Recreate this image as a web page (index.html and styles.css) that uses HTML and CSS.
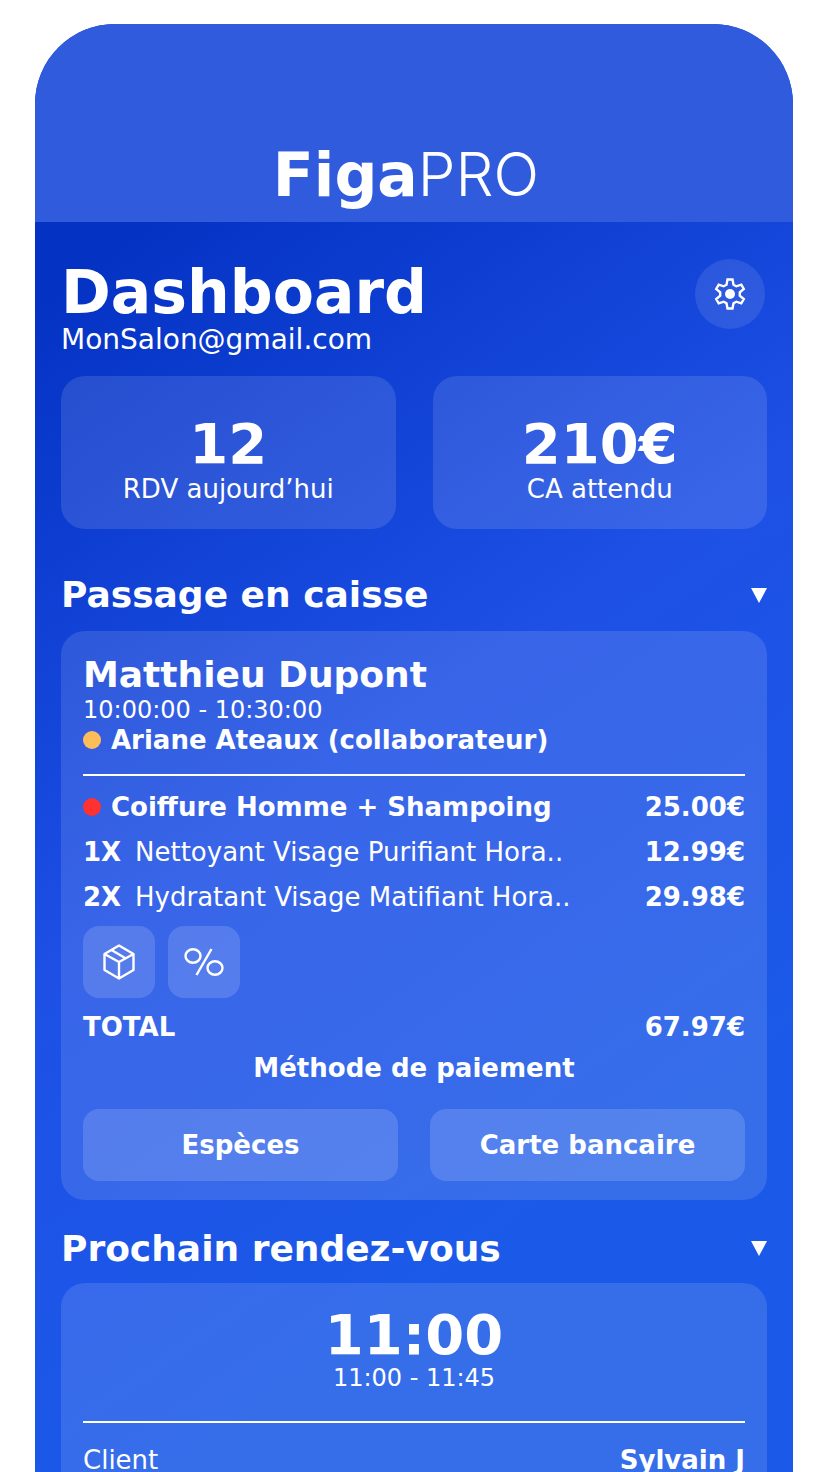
FILE: index.html
```html
<!DOCTYPE html>
<html lang="fr">
<head>
    <meta charset="UTF-8">
    <meta name="viewport" content="width=device-width, initial-scale=1.0">
    <title>FigaPRO</title>
    <link rel="stylesheet" href="styles.css">
</head>
<body>
    <div class="app">
        <header class="app-header">
            <div class="logo"><strong>Figa</strong><span class="pro">PRO</span></div>
        </header>

        <main class="content">
            <div class="page-title">
                <div>
                    <h1>Dashboard</h1>
                    <p class="email">MonSalon@gmail.com</p>
                </div>
                <button class="settings" type="button" aria-label="Paramètres">
                    <svg viewBox="-18 -18 36 36" width="36" height="36" fill="none" stroke="#fff" stroke-width="2.4">
                        <path d="M-3.5-9.3L-2.5-14.5H2.5L3.5-9.3 6.3-7.7 11.3-9.4 13.8-5.1 9.8-1.6V1.6L13.8 5.1 11.3 9.4 6.3 7.7 3.5 9.3 2.5 14.5H-2.5L-3.5 9.3-6.3 7.7-11.3 9.4-13.8 5.1-9.8 1.6V-1.6L-13.8-5.1-11.3-9.4-6.3-7.7z"/>
                        <circle r="5" fill="#fff" stroke="none"/>
                    </svg>
                </button>
            </div>

            <!-- Chiffres du jour -->
            <div class="stats">
                <div class="stat">
                    <strong>12</strong>
                    <span>RDV aujourd’hui</span>
                </div>
                <div class="stat">
                    <strong>210€</strong>
                    <span>CA attendu</span>
                </div>
            </div>

            <!-- Passage en caisse -->
            <details class="section" open>
                <summary>
                    <h2>Passage en caisse</h2>
                    <svg class="arrow" viewBox="0 0 16 15" width="16" height="15"><path d="M0 0h16L8 15z" fill="#fff"/></svg>
                </summary>
                <div class="card">
                    <h3>Matthieu Dupont</h3>
                    <p class="hours">10:00:00 - 10:30:00</p>
                    <p class="staff"><span class="dot orange"></span>Ariane Ateaux (collaborateur)</p>
                    <hr>
                    <ul class="lines">
                        <li><span class="dot red"></span><b class="name">Coiffure Homme + Shampoing</b><b>25.00€</b></li>
                        <li><b class="qty">1X</b><span class="name">Nettoyant Visage Purifiant Hora..</span><b>12.99€</b></li>
                        <li><b class="qty">2X</b><span class="name">Hydratant Visage Matifiant Hora..</span><b>29.98€</b></li>
                    </ul>
                    <div class="tools">
                        <button type="button" aria-label="Ajouter un produit">
                            <svg viewBox="0 0 34 36" width="34" height="36" fill="none" stroke="#fff" stroke-width="2.4" stroke-linejoin="round">
                                <path d="M17 1.5l14.500 8.500v16L17 34.500 2.500 26V10zM2.500 10L17 18l14.500-8M17 18v16.500M23.500 14.200L9.500 6"/>
                            </svg>
                        </button>
                        <button type="button" aria-label="Remise">
                            <svg viewBox="0 0 40 28" width="40" height="28" fill="none" stroke="#fff" stroke-width="2.4">
                                <ellipse cx="9" cy="8" rx="7.5" ry="6.7"/>
                                <ellipse cx="31" cy="20" rx="7.5" ry="6.7"/>
                                <path d="M27.5 1L12.5 27"/>
                            </svg>
                        </button>
                    </div>
                    <div class="total"><b>TOTAL</b><b>67.97€</b></div>
                    <h4>Méthode de paiement</h4>
                    <div class="payments">
                        <button type="button">Espèces</button>
                        <button type="button">Carte bancaire</button>
                    </div>
                </div>
            </details>

            <!-- Prochain rendez-vous -->
            <details class="section" open>
                <summary>
                    <h2>Prochain rendez-vous</h2>
                    <svg class="arrow" viewBox="0 0 16 15" width="16" height="15"><path d="M0 0h16L8 15z" fill="#fff"/></svg>
                </summary>
                <div class="card next">
                    <div class="time">11:00</div>
                    <p class="slot">11:00 - 11:45</p>
                    <hr>
                    <div class="client"><span>Client</span><b>Sylvain J</b></div>
                </div>
            </details>
        </main>
    </div>
</body>
</html>
```
FILE: styles.css
```css
* {
    box-sizing: border-box;
}

body {
    background-color: #fff;
    color: #fff;
    font-family: "DejaVu Sans", Verdana, sans-serif;
    font-size: 26px;
    line-height: 30px;
    margin: 0;
    height: 100vh;
    overflow: hidden;
}

h1, h2, h3, h4, p, ul {
    margin: 0;
    padding: 0;
}

b, strong {
    font-weight: bold;
}

button {
    border: none;
    color: #fff;
    font: inherit;
    font-weight: bold;
    padding: 0;
    cursor: pointer;
}

.app {
    margin: 24px 35px 0;
    min-height: 100vh;
    border-radius: 80px 80px 0 0;
    overflow: hidden;
    background: linear-gradient(145deg, #0433c4 14%, #1e50e6 48%, #1b5ae8 78%, #1b5ae8);
}

.app-header {
    height: 198px;
    padding-bottom: 12px;
    display: flex;
    align-items: flex-end;
    justify-content: center;
    background-color: #2f5bdc;
}

.logo {
    font-size: 60px;
    line-height: 70px;
    padding-right: 16px;
}

.pro {
    font-family: Inter, sans-serif;
    font-weight: 300;
}

.content {
    padding: 37px 26px 0;
}

.page-title {
    display: flex;
    justify-content: space-between;
    align-items: flex-start;
}

h1 {
    font-size: 60px;
    line-height: 66px;
}

.email {
    font-size: 28px;
}

.settings {
    width: 70px;
    height: 70px;
    margin-right: 2px;
    border-radius: 50%;
    display: flex;
    align-items: center;
    justify-content: center;
    background-color: rgba(255, 255, 255, 0.1);
}

.stats {
    display: grid;
    grid-template-columns: 1fr 1fr;
    gap: 37px;
    margin-top: 21px;
}

.stat {
    height: 153px;
    padding-top: 38px;
    border-radius: 24px;
    display: flex;
    flex-direction: column;
    align-items: center;
    background-color: rgba(255, 255, 255, 0.12);
}

.stat strong {
    font-size: 56px;
    line-height: 60px;
}

.section summary {
    height: 102px;
    padding-top: 30px;
    display: flex;
    align-items: center;
    justify-content: space-between;
    list-style: none;
    cursor: pointer;
}

.section + .section summary {
    height: 83px;
    padding-top: 14px;
}

h2, h3 {
    font-size: 36px;
    line-height: 40px;
}

.card {
    padding: 24px 22px 19px;
    border-radius: 24px;
    background-color: rgba(255, 255, 255, 0.12);
}

.hours, .slot {
    font-size: 24px;
}

.staff {
    display: flex;
    align-items: center;
    font-weight: bold;
}

.dot {
    width: 18px;
    height: 18px;
    margin-right: 10px;
    border-radius: 50%;
}

.orange {
    background-color: #ffbd59;
}

.red {
    background-color: #ff3131;
}

hr {
    height: 2px;
    margin: 19px 0 8px;
    border: none;
    background-color: #fff;
}

.lines {
    list-style: none;
}

.lines li {
    display: flex;
    align-items: center;
    height: 45px;
}

.name {
    flex: 1;
    white-space: nowrap;
}

.qty {
    width: 52px;
}

.tools {
    display: flex;
    gap: 13px;
    margin-top: 7px;
}

.tools button {
    width: 72px;
    height: 72px;
    border-radius: 16px;
    display: flex;
    align-items: center;
    justify-content: center;
    background-color: rgba(255, 255, 255, 0.15);
}

.total, .client {
    display: flex;
    justify-content: space-between;
}

.total {
    margin-top: 14px;
}

h4 {
    font-size: 26px;
    line-height: 30px;
    margin: 11px 0 26px;
    text-align: center;
}

.payments {
    display: grid;
    grid-template-columns: 1fr 1fr;
    gap: 32px;
}

.payments button {
    height: 72px;
    border-radius: 16px;
    background-color: rgba(255, 255, 255, 0.15);
}

.next {
    padding-top: 24px;
}

.time {
    font-size: 56px;
    font-weight: bold;
    line-height: 56px;
    text-align: center;
}

.slot {
    text-align: center;
}

.next hr {
    margin: 28px 0 22px;
}
```
